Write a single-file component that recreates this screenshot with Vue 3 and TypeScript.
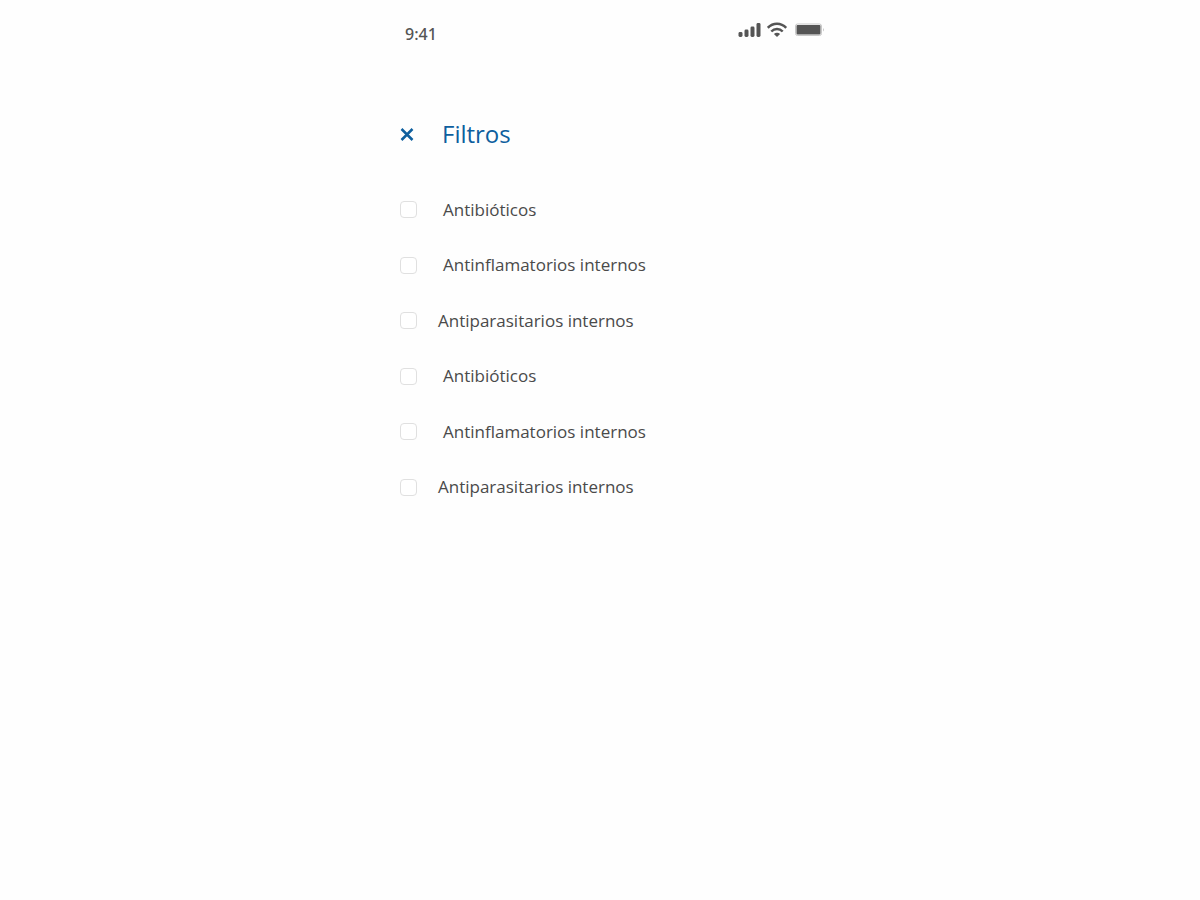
<script setup lang="ts">
import { ref } from 'vue'

interface FilterOption {
  id: string
  label: string
  compact?: boolean
}

const options: FilterOption[] = [
  { id: 'filter-1', label: 'Antibióticos' },
  { id: 'filter-2', label: 'Antinflamatorios internos' },
  { id: 'filter-3', label: 'Antiparasitarios internos', compact: true },
  { id: 'filter-4', label: 'Antibióticos' },
  { id: 'filter-5', label: 'Antinflamatorios internos' },
  { id: 'filter-6', label: 'Antiparasitarios internos', compact: true },
]

const selected = ref<string[]>([])
</script>

<template>
  <main class="screen">
    <div class="status">
      <span class="time">9:41</span>
      <div class="indicators">
        <svg width="24" height="16" viewBox="0 0 24 16" fill="#555" aria-hidden="true">
          <rect x="0.5" y="10" width="4" height="5" rx="1.4" />
          <rect x="6.5" y="7.5" width="4" height="7.5" rx="1.4" />
          <rect x="12.5" y="4.5" width="4" height="10.5" rx="1.4" />
          <rect x="18.5" y="1" width="4" height="14" rx="1.4" />
        </svg>
        <svg width="22" height="16" viewBox="0 0 22 16" fill="none" stroke="#555" stroke-width="2.5" aria-hidden="true">
          <path d="M.8 5.8C6 .3 14 .3 19.2 5.8" />
          <path d="M4.3 9.5C7.5 6.2 12.5 6.2 15.700 9.5" />
          <path d="M6.900 12C8.700 10.400 11.300 10.400 13.100 12L10 15Z" fill="#555" stroke="none" />
        </svg>
        <svg width="31" height="16" viewBox="0 0 31 16" aria-hidden="true">
          <rect x="1.5" y="2" width="26" height="11.5" rx="2" fill="#fff" stroke="#c8c8c8" />
          <rect x="2.5" y="3" width="24" height="9.5" rx="1" fill="#555" />
          <path d="M29 6Q31 7.800 29 9.600Z" fill="#c8c8c8" />
        </svg>
      </div>
    </div>

    <header class="heading">
      <button class="close" type="button" aria-label="Cerrar">
        <svg width="14" height="14" viewBox="0 0 14 14" fill="none" stroke="#0e5f9e" stroke-width="2.5" aria-hidden="true">
          <path d="M1.5 2L12.5 13M12.5 2L1.5 13" />
        </svg>
      </button>
      <h1 class="title">Filtros</h1>
    </header>

    <ul class="options">
      <li v-for="option in options" :key="option.id" class="option" :class="{ compact: option.compact }">
        <input :id="option.id" v-model="selected" class="box" type="checkbox" :value="option.id" />
        <label :for="option.id">{{ option.label }}</label>
      </li>
    </ul>
  </main>
</template>

<style>
body {
  background: #fefefe;
}
</style>

<style scoped>
.screen {
  box-sizing: border-box;
  max-width: 464px;
  margin: 0 auto;
  padding: 20px 6px 20px 32px;
  font-family: "Open Sans", "Noto Sans", sans-serif;
  color: #4a4a4a;
}

.status {
  display: flex;
  justify-content: space-between;
  align-items: flex-start;
  padding-left: 5px;
}

.time {
  padding-top: 2px;
  font-family: "Noto Sans", sans-serif;
  font-size: 16px;
  font-weight: 500;
  line-height: 24px;
  color: #555;
}

.indicators {
  display: flex;
  gap: 5px;
  padding-top: 2px;
  margin-right: 1px;
}

.heading {
  display: flex;
  align-items: center;
  gap: 28px;
  margin-top: 68px;
}

.close {
  display: flex;
  padding: 0;
  border: 0;
  background: none;
  cursor: pointer;
}

.title {
  margin: 0;
  font-size: 24px;
  font-weight: 400;
  line-height: 40px;
  color: #0e5f9e;
}

.options {
  display: grid;
  grid-auto-rows: 1fr;
  min-height: 333px;
  margin: 28px 0 0;
  padding: 0;
  list-style: none;
}

.option {
  display: flex;
  align-items: center;
  gap: 26px;
  font-size: 17px;
  line-height: 24px;
}

.compact {
  gap: 21px;
}

.box {
  appearance: none;
  box-sizing: border-box;
  width: 17px;
  height: 17px;
  margin: 0;
  border: 1px solid #e0e0e0;
  border-radius: 4px;
  background: #fff;
}

.box:checked {
  border-color: #0e5f9e;
  background: #0e5f9e;
}
</style>
